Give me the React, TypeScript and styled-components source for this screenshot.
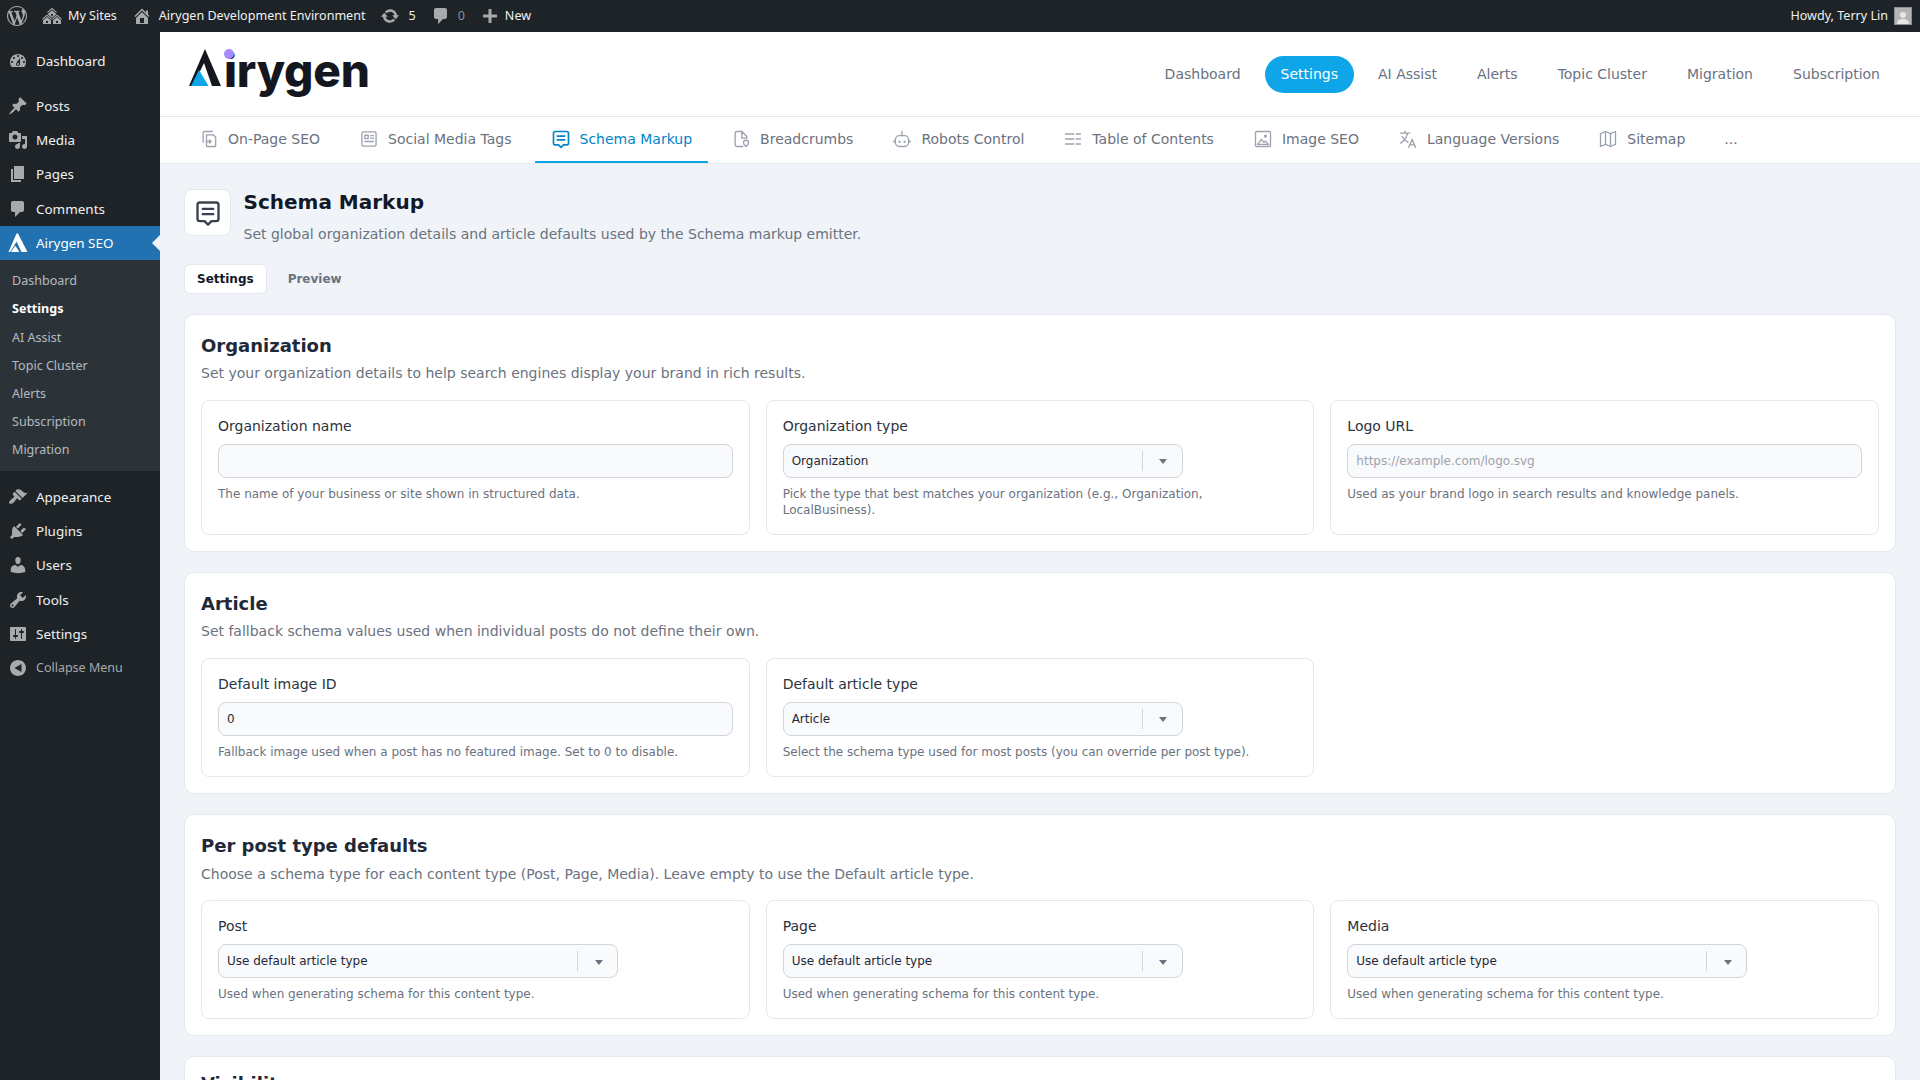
import React from "react";
import styled, { createGlobalStyle } from "styled-components";

const Global = createGlobalStyle`
  html, body { margin: 0; padding: 0; height: 100%; overflow: hidden; background: #f0f4f8; }
  * { box-sizing: border-box; }
  #root { height: 100vh; }
`;

const Page = styled.div`
  display: flex;
  flex-direction: column;
  height: 1080px;
  overflow: hidden;
  font-family: "DejaVu Sans", sans-serif;
`;
const AdminBar = styled.header`
  flex: 0 0 32px;
  height: 32px;
  min-height: 0;
  display: flex;
  align-items: center;
  gap: 15px;
  padding: 0 8px 0 7px;
  background: #1d2327;
  color: #f0f0f1;
  font: 12.55px/32px "Noto Sans", sans-serif;
`;
const BarItem = styled.div<{ $gap?: number; $muted?: boolean }>`
  display: flex;
  align-items: center;
  gap: ${(p) => p.$gap ?? 6}px;
  white-space: nowrap;
  color: ${(p) => (p.$muted ? "#a7aaad" : "#f0f0f1")};
`;
const BarIcon = styled.span`
  display: flex;
  color: #a7aaad;
`;
const BarSpacer = styled.div`
  flex: 1;
`;
const Count = styled.span<{ $dim?: boolean }>`
  color: ${(p) => (p.$dim ? "#8c8f94" : "#f0f0f1")};
`;
const Avatar = styled.div`
  width: 18px;
  height: 18px;
  background: #b4b4b4;
  border: 1px solid #8c8f94;
  display: flex;
  align-items: flex-end;
  justify-content: center;
  overflow: hidden;
`;
const Body = styled.div`
  flex: 1;
  display: flex;
  min-height: 0;
`;
const Sidebar = styled.nav`
  flex: 0 0 160px;
  display: flex;
  flex-direction: column;
  padding-top: 11.4px;
  background: #1d2327;
  font: 13.45px/18px "Noto Sans", sans-serif;
`;
const MenuItem = styled.div<{ $active?: boolean; $dim?: boolean; $top?: number }>`
  position: relative;
  flex: 0 0 34.3px;
  display: flex;
  align-items: center;
  gap: 8px;
  padding-left: 8px;
  margin-top: ${(p) => p.$top ?? 0}px;
  color: ${(p) => (p.$active ? "#fff" : p.$dim ? "#a7aaad" : "#f0f0f1")};
  background: ${(p) => (p.$active ? "#2271b1" : "transparent")};
  font-size: ${(p) => (p.$dim ? "12.5px" : "13.45px")};
  svg { color: ${(p) => (p.$active ? "#fff" : "#a7aaad")}; }
`;
const ActiveArrow = styled.span`
  position: absolute;
  right: 0;
  top: 9px;
  border: 8px solid transparent;
  border-right-color: #f0f4f8;
  border-left-width: 0;
`;
const SubMenu = styled.div`
  display: flex;
  flex-direction: column;
  padding: 7px 0;
  background: #2c3338;
`;
const SubItem = styled.div<{ $current?: boolean }>`
  height: 28.2px;
  padding-left: 12px;
  line-height: 28px;
  font-size: 12.55px;
  color: ${(p) => (p.$current ? "#fff" : "rgba(240,246,252,.7)")};
  font-weight: ${(p) => (p.$current ? 700 : 400)};
`;
const Main = styled.main`
  flex: 1;
  min-width: 0;
  display: flex;
  flex-direction: column;
`;
const TopHeader = styled.div`
  flex: 0 0 85px;
  display: flex;
  align-items: center;
  justify-content: space-between;
  padding: 0 24px 0 28px;
  background: #fff;
  border-bottom: 1px solid #e5e7eb;
`;
const Logo = styled.div`
  position: relative;
  display: flex;
  align-items: baseline;
  height: 50px;
  margin-bottom: 6px;
`;
const LogoMark = styled.svg`
  align-self: flex-end;
  margin-bottom: 10px;
`;
const LogoText = styled.span`
  margin-left: 3px;
  font: 800 46px/48px Inter, sans-serif;
  letter-spacing: -0.2px;
  color: #14171f;
`;
const LogoDot = styled.span`
  position: absolute;
  left: 36px;
  top: 3px;
  width: 10px;
  height: 10px;
  border-radius: 50%;
  background: #a78bfa;
`;
const Nav = styled.div`
  display: flex;
  align-items: center;
  gap: 8px;
`;
const NavLink = styled.div<{ $active?: boolean }>`
  height: 37px;
  padding: 0 16px;
  border-radius: 19px;
  font-size: 14px;
  line-height: 37px;
  color: ${(p) => (p.$active ? "#fff" : "#6b7280")};
  background: ${(p) => (p.$active ? "#0ea5e9" : "transparent")};
`;
const TabBar = styled.div`
  flex: 0 0 46px;
  display: flex;
  align-items: stretch;
  gap: 7px;
  padding-left: 23px;
  background: #fff;
  border-bottom: 1px solid #e5e7eb;
`;
const Tab = styled.div<{ $active?: boolean }>`
  display: flex;
  align-items: center;
  gap: 9px;
  height: 46px;
  padding: 0 16px 1px;
  border-bottom: 2px solid ${(p) => (p.$active ? "#0ea5e9" : "transparent")};
  font-size: 14px;
  color: ${(p) => (p.$active ? "#0284c7" : "#6b7280")};
  white-space: nowrap;
  svg { color: ${(p) => (p.$active ? "#0284c7" : "#9ca3af")}; }
`;
const Content = styled.div`
  flex: 1;
  min-height: 0;
  overflow: hidden;
  padding: 25px 24px 0;
  background: #f0f4f8;
`;
const PageHead = styled.div`
  display: flex;
  gap: 12.5px;
`;
const HeadIcon = styled.div`
  flex: 0 0 47px;
  height: 47px;
  display: flex;
  align-items: center;
  justify-content: center;
  background: #fff;
  border: 1px solid #e5e7eb;
  border-radius: 8px;
  color: #374151;
`;
const PageTitle = styled.h1`
  margin: 0;
  font-size: 20px;
  font-weight: 700;
  line-height: 26px;
  color: #111827;
`;
const PageDesc = styled.p`
  margin: 9px 0 0;
  font-size: 14px;
  line-height: 20px;
  color: #6b7280;
`;
const SubTabs = styled.div`
  display: flex;
  gap: 8px;
  margin: 20px 0 19.5px;
`;
const SubTab = styled.div<{ $active?: boolean }>`
  height: 30px;
  padding: 0 12px;
  border-radius: 6px;
  border: 1px solid ${(p) => (p.$active ? "#e5e7eb" : "transparent")};
  background: ${(p) => (p.$active ? "#fff" : "transparent")};
  font-size: 12px;
  font-weight: 700;
  line-height: 28px;
  color: ${(p) => (p.$active ? "#111827" : "#6b7280")};
`;
const Section = styled.section`
  padding: 17px 16px 16px;
  margin-bottom: 20.25px;
  background: #fff;
  border: 1px solid #e5e7eb;
  border-radius: 10px;
`;
const SectionTitle = styled.h2`
  margin: 0;
  font-size: 18px;
  font-weight: 700;
  line-height: 28px;
  color: #1f2937;
`;
const ClippedTitle = styled(SectionTitle)`
  margin-top: -4px;
`;
const SectionDesc = styled.p`
  margin: 4.5px 0 17.5px;
  font-size: 14px;
  line-height: 18px;
  color: #6b7280;
`;
const Fields = styled.div`
  display: grid;
  grid-template-columns: repeat(3, 1fr);
  gap: 16px;
`;
const Field = styled.div`
  padding: 16px;
  border: 1px solid #e5e7eb;
  border-radius: 8px;
`;
const Label = styled.div`
  margin-bottom: 9px;
  font-size: 14px;
  line-height: 18px;
  color: #2b3340;
`;
const Input = styled.div<{ $placeholder?: boolean }>`
  height: 34px;
  padding: 0 8px;
  background: #f9fafb;
  border: 1px solid #d1d5db;
  border-radius: 8px;
  font-size: 12px;
  line-height: 32px;
  color: ${(p) => (p.$placeholder ? "#9ca3af" : "#1f2937")};
`;
const Select = styled.div`
  display: flex;
  align-items: center;
  width: 400px;
  height: 34px;
  padding-left: 8px;
  background: #f9fafb;
  border: 1px solid #d1d5db;
  border-radius: 8px;
  font-size: 12px;
  color: #1f2937;
`;
const SelectValue = styled.span`
  flex: 1;
`;
const SelectDivider = styled.span`
  width: 1px;
  height: 20px;
  background: #d1d5db;
`;
const Caret = styled.span`
  flex: 0 0 39px;
  display: flex;
  justify-content: center;
  padding: 2px 0 0 2px;
  &::before {
    content: "";
    border-top: 5px solid #6b7280;
    border-left: 4.5px solid transparent;
    border-right: 4.5px solid transparent;
  }
`;
const Help = styled.p`
  margin: 8px 0 0;
  font-size: 12px;
  line-height: 16px;
  color: #6b7280;
`;
const IconSvg = styled.svg`
  flex-shrink: 0;
`;

const Dash = ({ d, size = 20 }: { d: string; size?: number }) => (
  <IconSvg width={size} height={size} viewBox="0 0 20 20" fill="currentColor" fillRule="evenodd">
    <path d={d} />
  </IconSvg>
);
const D = {
  wp: "M20 10c0-5.51-4.49-10-10-10C4.48 0 0 4.49 0 10c0 5.52 4.48 10 10 10 5.51 0 10-4.48 10-10zM7.78 15.37L4.37 6.22c.55-.02 1.17-.08 1.17-.08.5-.06.44-1.13-.06-1.11 0 0-1.45.11-2.37.11-.18 0-.37 0-.58-.01C4.12 2.69 6.87 1.11 10 1.11c2.33 0 4.45.87 6.05 2.34-.68-.11-1.65.39-1.65 1.58 0 .74.45 1.36.9 2.1.35.61.55 1.36.55 2.46 0 1.49-1.4 5-1.4 5l-3.03-8.37c.54-.02.82-.17.82-.17.5-.05.44-1.25-.06-1.22 0 0-1.44.12-2.38.12-.87 0-2.33-.12-2.33-.12-.5-.03-.56 1.2-.06 1.22l.92.08 1.26 3.41zM17.41 10c.24-.64.74-1.87.43-4.25.7 1.29 1.05 2.71 1.05 4.25 0 3.29-1.73 6.24-4.4 7.78.97-2.59 1.94-5.2 2.92-7.78zM6.1 18.09C3.12 16.65 1.11 13.53 1.11 10c0-1.3.23-2.48.72-3.59C3.25 10.3 4.67 14.2 6.1 18.09zm4.03-6.63l2.58 6.98c-.86.29-1.76.45-2.71.45-.79 0-1.57-.11-2.29-.33.81-2.38 1.62-4.74 2.42-7.1z",
  sites: "M14.27 6.87L10 3.14 5.73 6.87 5 6.14l5-4.38 5 4.38zM14 8.42l-4.05 3.43L6 8.38v-.74l4-3.5 4 3.5v.78zM11 9.7V8H9v1.7h2zm-1.73 4.03L5 10 .73 13.73 0 13l5-4.38L10 13zm10 0L15 10l-4.27 3.73L10 13l5-4.38L20 13zM5 11l4 3.5V18H1v-3.5zm10 0l4 3.5V18h-8v-3.5zM6 17v-2H4v2h2zm10 0v-2h-2v2h2z",
  home: "M16 8.5l1.53 1.53-1.06 1.06L10 4.62l-6.47 6.47-1.06-1.06L10 2.5l4 4v-2h2v4zm-6-2.46l6 5.99V18H4v-5.97zM12 17v-5H8v5h4z",
  updates: "M10.2 3.28c3.53 0 6.43 2.61 6.92 6h2.08l-3.5 4-3.5-4h2.32c-.45-1.97-2.21-3.45-4.32-3.45-1.45 0-2.73.71-3.54 1.78L4.95 5.66C6.23 4.2 8.11 3.28 10.2 3.28zm-.4 13.44c-3.52 0-6.43-2.61-6.92-6H.8l3.5-4c1.17 1.33 2.33 2.67 3.5 4H5.48c.45 1.97 2.21 3.45 4.32 3.45 1.45 0 2.73-.71 3.54-1.78l1.71 1.95c-1.28 1.46-3.15 2.38-5.25 2.38z",
  comment: "M5 2h9c1.1 0 2 .9 2 2v7c0 1.1-.9 2-2 2h-2l-5 5v-5H5c-1.1 0-2-.9-2-2V4c0-1.1.9-2 2-2z",
  plus: "M17 8.5v3h-5.5V17h-3v-5.5H3v-3h5.5V3h3v5.5H17z",
  dashboard: "M3.76 16h12.48c1.1-1.37 1.76-3.11 1.76-5 0-4.42-3.58-8-8-8s-8 3.58-8 8c0 1.89.66 3.63 1.76 5zM10 4c.55 0 1 .45 1 1s-.45 1-1 1-1-.45-1-1 .45-1 1-1zM6 6c.55 0 1 .45 1 1s-.45 1-1 1-1-.45-1-1 .45-1 1-1zm8 0c.55 0 1 .45 1 1s-.45 1-1 1-1-.45-1-1 .45-1 1-1zm-5.37 5.55L12 7v6c0 1.1-.9 2-2 2s-2-.9-2-2c0-.57.24-1.08.63-1.45zM4 10c.55 0 1 .45 1 1s-.45 1-1 1-1-.45-1-1 .45-1 1-1zm12 0c.55 0 1 .45 1 1s-.45 1-1 1-1-.45-1-1 .45-1 1-1zm-5 3c0-.55-.45-1-1-1s-1 .45-1 1 .45 1 1 1 1-.45 1-1z",
  post: "M10.44 3.02l1.82-1.82 6.36 6.35-1.83 1.82c-1.05-.68-2.48-.57-3.41.36l-.75.75c-.92.93-1.04 2.35-.35 3.41l-1.83 1.82-2.41-2.41-2.8 2.79c-.42.42-3.38 2.71-3.8 2.29s1.86-3.39 2.28-3.81l2.79-2.79L4.1 9.36l1.83-1.82c1.05.69 2.48.57 3.4-.36l.75-.75c.93-.92 1.05-2.35.36-3.41z",
  media: "M13 11V4c0-.55-.45-1-1-1h-1.67L9 1H5L3.67 3H2c-.55 0-1 .45-1 1v7c0 .55.45 1 1 1h10c.55 0 1-.45 1-1zM7 4.5c1.38 0 2.5 1.12 2.5 2.5S8.38 9.5 7 9.5 4.5 8.38 4.5 7 5.62 4.5 7 4.5zM14 6h5v10.5c0 1.38-1.12 2.5-2.5 2.5S14 17.88 14 16.5s1.12-2.5 2.5-2.5c.17 0 .34.02.5.05V9h-3V6zm-4 8.05V13h2v3.5c0 1.38-1.12 2.5-2.5 2.5S7 17.88 7 16.5 8.12 14 9.5 14c.17 0 .34.02.5.05z",
  page: "M6 15V2h10v13H6zm-1 1h8v2H3V5h2v11z",
  appearance: "M14.48 11.06L7.41 3.99l1.5-1.5c.5-.56 2.3-.47 3.51.32 1.21.8 1.43 1.28 2.91 2.1 1.18.64 2.45 1.26 4.45.85zm-.71.71L6.7 4.7 4.93 6.47c-.39.39-.39 1.02 0 1.41l1.06 1.06c.39.39.39 1.03 0 1.42-.6.6-1.43 1.11-2.21 1.69-.35.26-.7.53-1.01.84C1.43 13.23.78 15.82 1.41 16.5c.57.63 3.23-.02 4.58-1.37.32-.31.59-.66.85-1.01.58-.78 1.09-1.61 1.69-2.21.39-.39 1.03-.39 1.42 0l1.06 1.06c.39.39 1.02.39 1.41 0z",
  plugins: "M13.11 4.36L9.87 7.6 8 5.73l3.24-3.24c.35-.34 1.05-.2 1.56.32.52.51.66 1.21.31 1.55zm-8 1.77l.91-1.12 9.01 9.01-1.19.84c-.71.71-2.63 1.16-3.82 1.16H6.14L4.9 17.26c-.59.59-1.54.59-2.12 0-.59-.58-.59-1.53 0-2.12l1.24-1.24v-3.88c0-1.13.4-3.19 1.09-3.89zm7.26 3.97l3.24-3.24c.34-.35 1.04-.21 1.55.31.52.51.66 1.21.31 1.55l-3.24 3.25z",
  users: "M10 9.25c-2.27 0-2.73-3.44-2.73-3.44C7 4.02 7.82 2 9.97 2c2.16 0 2.98 2.02 2.71 3.81 0 0-.41 3.44-2.68 3.44zm0 2.57L12.72 10c2.39 0 4.52 2.33 4.52 4.53v2.49s-3.65 1.13-7.24 1.13c-3.65 0-7.24-1.13-7.24-1.13v-2.49c0-2.25 1.94-4.48 4.47-4.48z",
  tools: "M16.68 9.77c-1.34 1.34-3.3 1.67-4.95.99l-5.41 6.52c-.99.99-2.59.99-3.58 0s-.99-2.59 0-3.57l6.52-5.42c-.68-1.65-.35-3.61.99-4.95 1.28-1.28 3.12-1.62 4.72-1.06l-2.89 2.89 2.82 2.82 2.86-2.87c.53 1.58.18 3.39-1.08 4.65zM3.81 16.21c.4.39 1.04.39 1.43 0 .4-.4.4-1.04 0-1.43-.39-.4-1.03-.4-1.43 0-.39.39-.39 1.03 0 1.43z",
  settings: "M18 16V4c0-.55-.45-1-1-1H3c-.55 0-1 .45-1 1v12c0 .55.45 1 1 1h14c.55 0 1-.45 1-1zM8 11h1c.55 0 1 .45 1 1s-.45 1-1 1H8v1.5c0 .28-.22.5-.5.5s-.5-.22-.5-.5V13H6c-.55 0-1-.45-1-1s.45-1 1-1h1V5.5c0-.28.22-.5.5-.5s.5.22.5.5V11zm5-2h-1c-.55 0-1-.45-1-1s.45-1 1-1h1V5.5c0-.28.22-.5.5-.5s.5.22.5.5V7h1c.55 0 1 .45 1 1s-.45 1-1 1h-1v5.5c0 .28-.22.5-.5.5s-.5-.22-.5-.5V9z",
  collapse: "M18 10c0-4.42-3.58-8-8-8s-8 3.58-8 8 3.58 8 8 8 8-3.58 8-8zm-4.5 4l-7-4 7-4v8z",
  airygen: "M10 .5L19.5 19H13.5L8.5 8.5 6.3 12.5 2 19H.5L8.5.5zM7.3 12.8L11.5 19H2.8z",
};

const Stroke = ({ size = 20, children }: { size?: number; children: React.ReactNode }) => (
  <IconSvg width={size} height={size} viewBox="0 0 24 24" fill="none" stroke="currentColor" strokeWidth={1.6} strokeLinecap="round" strokeLinejoin="round">
    {children}
  </IconSvg>
);
const MessageIcon = ({ size }: { size?: number }) => (
  <Stroke size={size}>
    <path d="M5 3h14a2 2 0 0 1 2 2v12a2 2 0 0 1-2 2h-4l-3 3-3-3H5a2 2 0 0 1-2-2V5a2 2 0 0 1 2-2z" strokeWidth={2} />
    <path d="M7.5 8.5h9M7.5 13h9" strokeWidth={2} />
  </Stroke>
);
const tabs: [string, React.ReactNode][] = [
  ["On-Page SEO", <Stroke><path d="M16 3H6.5A1.5 1.5 0 0 0 5 4.5V16" /><path d="M9 7h8l3 3v10a1 1 0 0 1-1 1H10a1 1 0 0 1-1-1z" /><path d="M9 15h5.5M12.5 13l2 2-2 2" /></Stroke>],
  ["Social Media Tags", <Stroke><rect x="3.5" y="3.5" width="17" height="17" rx="2" /><rect x="7" y="7.5" width="4" height="4" /><path d="M14 8h3.5M14 11h3.5M7 15h10.5" /></Stroke>],
  ["Schema Markup", <MessageIcon />],
  ["Breadcrumbs", <Stroke><path d="M13 3H7a2 2 0 0 0-2 2v14a2 2 0 0 0 2 2h7" /><path d="M13 3l6 6v2h-6z" /><path d="M18 21s3-2.5 3-4.5a3 3 0 0 0-6 0c0 2 3 4.5 3 4.5z" /></Stroke>],
  ["Robots Control", <Stroke><path d="M12 4v4M12 2.5v.5" /><rect x="4" y="8" width="16" height="13" rx="5" /><path d="M2.5 14v2M21.5 14v2" /><path d="M9 15v.5M15 15v.5" strokeWidth={2.5} /></Stroke>],
  ["Table of Contents", <Stroke><path d="M3 6h10M16 6h5M3 12h10M16 12h5M3 18h10M16 18h5" /></Stroke>],
  ["Image SEO", <Stroke><rect x="3" y="3" width="18" height="18" rx="1.5" /><circle cx="15" cy="8.5" r="1.2" /><path d="M5.5 18.5l4.5-6 3 3.5 2-1.5 3.5 4z" /></Stroke>],
  ["Language Versions", <Stroke><path d="M3 5h11M8.5 2.5V5M11.5 5C10.5 10 7 14.5 3 17M5 9c1.5 3 4 5.5 7 7" /><path d="M13 22l4-9.5L21 22M14.5 19h5" /></Stroke>],
  ["Sitemap", <Stroke><path d="M3 5.5l6-2.5 6 2.5 6-2.5v15.5l-6 2.5-6-2.5-6 2.5z" /><path d="M9 3v15.5M15 5.5V21" /></Stroke>],
];

const nav = ["Dashboard", "Settings", "AI Assist", "Alerts", "Topic Cluster", "Migration", "Subscription"];
const subs = ["Dashboard", "Settings", "AI Assist", "Topic Cluster", "Alerts", "Subscription", "Migration"];

const SelectBox = ({ value }: { value: string }) => (
  <Select>
    <SelectValue>{value}</SelectValue>
    <SelectDivider />
    <Caret />
  </Select>
);

const used = "Used when generating schema for this content type.";

export default function App() {
  return (
    <Page>
      <Global />
      <AdminBar>
        <BarItem $muted><Dash d={D.wp} /></BarItem>
        <BarItem><BarIcon><Dash d={D.sites} /></BarIcon>My Sites</BarItem>
        <BarItem $gap={7}><BarIcon><Dash d={D.home} /></BarIcon>Airygen Development Environment</BarItem>
        <BarItem $gap={8}><BarIcon><Dash d={D.updates} /></BarIcon><Count>5</Count></BarItem>
        <BarItem $gap={7}><BarIcon><Dash d={D.comment} /></BarIcon><Count $dim>0</Count></BarItem>
        <BarItem $gap={5}><BarIcon><Dash d={D.plus} /></BarIcon>New</BarItem>
        <BarSpacer />
        <BarItem>Howdy, Terry Lin
          <Avatar>
            <svg width="14" height="14" viewBox="0 0 14 14" fill="#e6e6e6"><circle cx="7" cy="5" r="3" /><path d="M1 14c0-4 3-5 6-5s6 1 6 5z" /></svg>
          </Avatar>
        </BarItem>
      </AdminBar>
      <Body>
        <Sidebar>
          <MenuItem><Dash d={D.dashboard} />Dashboard</MenuItem>
          <MenuItem $top={11}><Dash d={D.post} />Posts</MenuItem>
          <MenuItem><Dash d={D.media} />Media</MenuItem>
          <MenuItem><Dash d={D.page} />Pages</MenuItem>
          <MenuItem><Dash d={D.comment} />Comments</MenuItem>
          <MenuItem $active>
            <Dash d={D.airygen} />Airygen SEO<ActiveArrow />
          </MenuItem>
          <SubMenu>
            {subs.map((s, i) => <SubItem key={s + i} $current={i === 1}>{s}</SubItem>)}
          </SubMenu>
          <MenuItem $top={8}><Dash d={D.appearance} />Appearance</MenuItem>
          <MenuItem><Dash d={D.plugins} />Plugins</MenuItem>
          <MenuItem><Dash d={D.users} />Users</MenuItem>
          <MenuItem><Dash d={D.tools} />Tools</MenuItem>
          <MenuItem><Dash d={D.settings} />Settings</MenuItem>
          <MenuItem $dim><Dash d={D.collapse} />Collapse Menu</MenuItem>
        </Sidebar>
        <Main>
          <TopHeader>
            <Logo>
              <LogoMark width="33" height="37" viewBox="0 0 33 37">
                <path d="M17 0L33 37H24L16 14 5 37H1z" fill="#14171f" />
                <path d="M11 21L20.5 37H3z" fill="#0ea5e9" />
              </LogoMark>
              <LogoText>irygen</LogoText>
              <LogoDot />
            </Logo>
            <Nav>
              {nav.map((n) => <NavLink key={n} $active={n === "Settings"}>{n}</NavLink>)}
            </Nav>
          </TopHeader>
          <TabBar>
            {tabs.map(([label, icon]) => (
              <Tab key={label} $active={label === "Schema Markup"}>{icon}{label}</Tab>
            ))}
            <Tab>...</Tab>
          </TabBar>
          <Content>
            <PageHead>
              <HeadIcon><MessageIcon size={28} /></HeadIcon>
              <div>
                <PageTitle>Schema Markup</PageTitle>
                <PageDesc>Set global organization details and article defaults used by the Schema markup emitter.</PageDesc>
              </div>
            </PageHead>
            <SubTabs>
              <SubTab $active>Settings</SubTab>
              <SubTab>Preview</SubTab>
            </SubTabs>
            <Section>
              <SectionTitle>Organization</SectionTitle>
              <SectionDesc>Set your organization details to help search engines display your brand in rich results.</SectionDesc>
              <Fields>
                <Field>
                  <Label>Organization name</Label>
                  <Input />
                  <Help>The name of your business or site shown in structured data.</Help>
                </Field>
                <Field>
                  <Label>Organization type</Label>
                  <SelectBox value="Organization" />
                  <Help>Pick the type that best matches your organization (e.g., Organization, LocalBusiness).</Help>
                </Field>
                <Field>
                  <Label>Logo URL</Label>
                  <Input $placeholder>https://example.com/logo.svg</Input>
                  <Help>Used as your brand logo in search results and knowledge panels.</Help>
                </Field>
              </Fields>
            </Section>
            <Section>
              <SectionTitle>Article</SectionTitle>
              <SectionDesc>Set fallback schema values used when individual posts do not define their own.</SectionDesc>
              <Fields>
                <Field>
                  <Label>Default image ID</Label>
                  <Input>0</Input>
                  <Help>Fallback image used when a post has no featured image. Set to 0 to disable.</Help>
                </Field>
                <Field>
                  <Label>Default article type</Label>
                  <SelectBox value="Article" />
                  <Help>Select the schema type used for most posts (you can override per post type).</Help>
                </Field>
              </Fields>
            </Section>
            <Section>
              <SectionTitle>Per post type defaults</SectionTitle>
              <SectionDesc>Choose a schema type for each content type (Post, Page, Media). Leave empty to use the Default article type.</SectionDesc>
              <Fields>
                {["Post", "Page", "Media"].map((l) => (
                  <Field key={l}>
                    <Label>{l}</Label>
                    <SelectBox value="Use default article type" />
                    <Help>{used}</Help>
                  </Field>
                ))}
              </Fields>
            </Section>
            <Section>
              <ClippedTitle>Visibility</ClippedTitle>
            </Section>
          </Content>
        </Main>
      </Body>
    </Page>
  );
}
